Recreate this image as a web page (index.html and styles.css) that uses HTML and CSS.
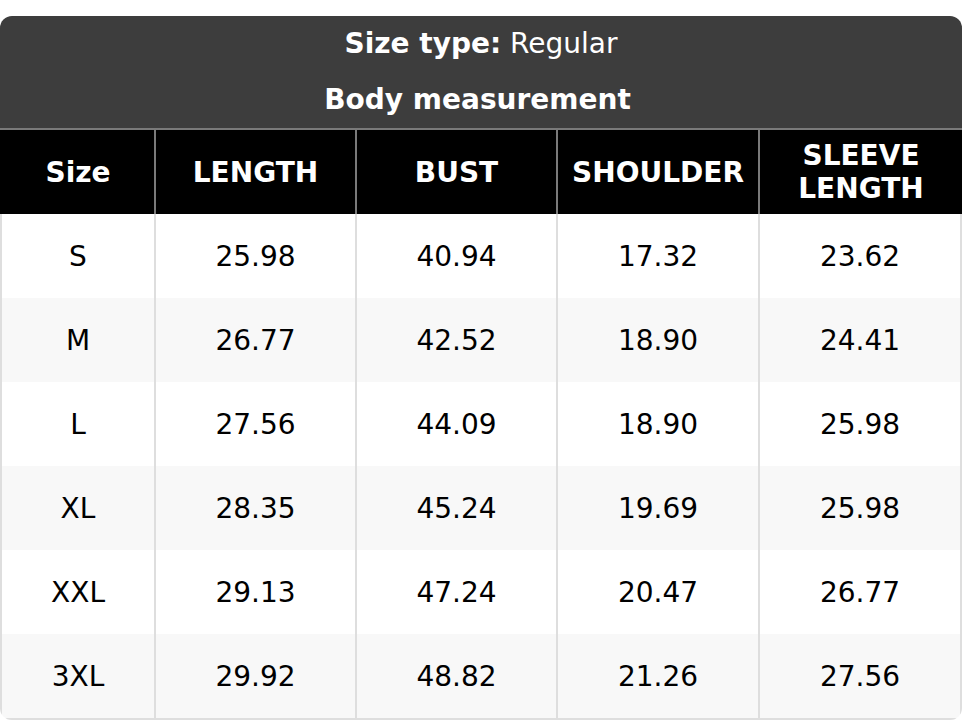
FILE: index.html
```html
<!DOCTYPE html>
<html lang="en">
<head>
<meta charset="utf-8">
<title>Size chart</title>
<link rel="stylesheet" href="styles.css">
</head>
<body>
<div class="chart">
  <table class="size-table">
    <colgroup>
      <col class="c1"><col class="c2"><col class="c3"><col class="c4"><col class="c5">
    </colgroup>
    <thead>
      <tr class="title-row">
        <th colspan="5" class="title"><strong>Size type:</strong> Regular</th>
      </tr>
      <tr class="title-row">
        <th colspan="5" class="title sub"><strong>Body measurement</strong></th>
      </tr>
      <tr class="head-row">
        <th>Size</th>
        <th>LENGTH</th>
        <th>BUST</th>
        <th>SHOULDER</th>
        <th>SLEEVE<br>LENGTH</th>
      </tr>
    </thead>
    <tbody>
      <tr><td>S</td><td>25.98</td><td>40.94</td><td>17.32</td><td>23.62</td></tr>
      <tr><td>M</td><td>26.77</td><td>42.52</td><td>18.90</td><td>24.41</td></tr>
      <tr><td>L</td><td>27.56</td><td>44.09</td><td>18.90</td><td>25.98</td></tr>
      <tr><td>XL</td><td>28.35</td><td>45.24</td><td>19.69</td><td>25.98</td></tr>
      <tr><td>XXL</td><td>29.13</td><td>47.24</td><td>20.47</td><td>26.77</td></tr>
      <tr><td>3XL</td><td>29.92</td><td>48.82</td><td>21.26</td><td>27.56</td></tr>
    </tbody>
  </table>
</div>
</body>
</html>
```
FILE: styles.css
```css
html, body {
  margin: 0;
  padding: 0;
  background: #ffffff;
}
body {
  font-family: "DejaVu Sans", "Liberation Sans", sans-serif;
  font-size: 28px;
  color: #000000;
}
.chart {
  margin-top: 16px;
  width: 962px;
  border-radius: 12px;
  overflow: hidden;
}
.size-table {
  width: 962px;
  table-layout: fixed;
  border-collapse: separate;
  border-spacing: 0;
}
.c1 { width: 156px; }
.c2 { width: 201px; }
.c3 { width: 201px; }
.c4 { width: 202px; }
.c5 { width: 202px; }

.size-table th,
.size-table td {
  padding: 0;
  text-align: center;
  vertical-align: middle;
  box-sizing: border-box;
}
.title {
  background: #3d3d3d;
  color: #ffffff;
  font-weight: normal;
  height: 55px;
}
.title strong { font-weight: bold; }
.title.sub {
  border-bottom: 2px solid #7a7a7a;
  height: 59px;
  padding-right: 7px;
}
.head-row th {
  background: #000000;
  color: #ffffff;
  font-weight: bold;
  height: 84px;
  border-right: 2px solid #7a7a7a;
  line-height: 33px;
}
.head-row th:first-child { padding-left: 2px; }
.head-row th:last-child { border-right: none; }

.size-table td {
  height: 84px;
  border-right: 2px solid #dedede;
  background: #ffffff;
}
.size-table td:first-child { border-left: 2px solid #dedede; }
.size-table td:last-child { border-right: 2px solid #dedede; }
.size-table tbody tr:nth-child(even) td { background: #f8f8f8; }
.size-table tbody tr:last-child td {
  border-bottom: 2px solid #dedede;
  height: 86px;
}
```
